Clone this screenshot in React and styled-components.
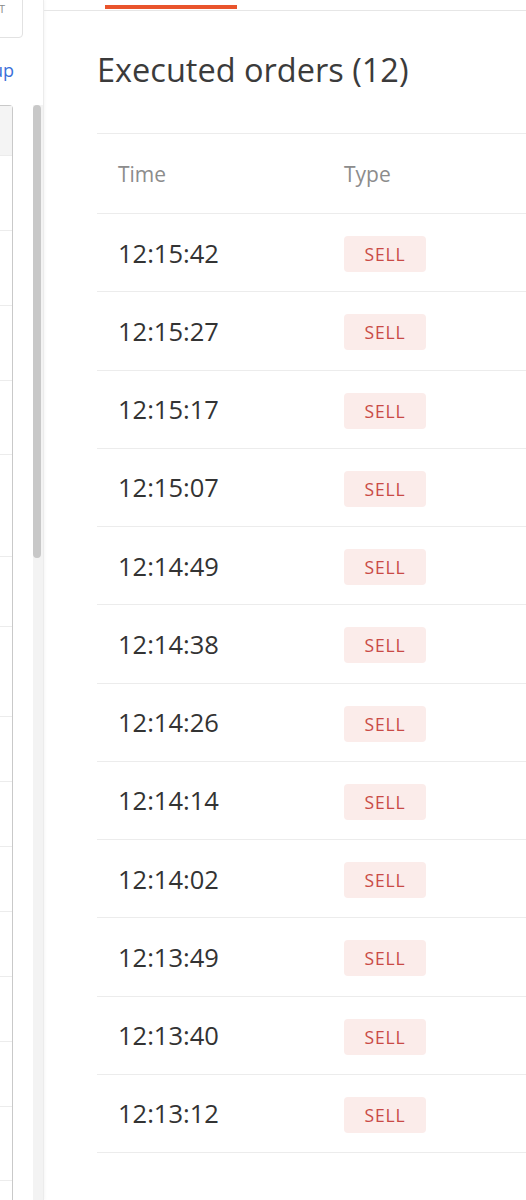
import React from 'react'
import styled, { createGlobalStyle } from 'styled-components'

const GlobalStyle = createGlobalStyle`
  html, body {
    margin: 0;
    padding: 0;
    background: #fff;
    font-family: "Open Sans", "Liberation Sans", sans-serif;
    overflow: hidden;
  }
`

const Page = styled.div`
  display: flex;
  width: 526px;
  height: 1200px;
  overflow: hidden;
`

// left column: only the right edge of a wider sidebar is visible
const Sidebar = styled.aside`
  display: flex;
  flex: 0 0 43px;
  border-right: 1px solid #ececec;
  box-shadow: 1px 0 3px rgba(0, 0, 0, 0.04);
`

const SideInner = styled.div`
  display: flex;
  flex-direction: column;
  align-items: flex-end;
  width: 33px;
  overflow: hidden;
`

const TopCard = styled.div`
  flex: 0 0 auto;
  width: 120px;
  height: 48px;
  margin-top: -10px;
  margin-right: 10px;
  box-sizing: border-box;
  border: 1px solid #e2e2e2;
  border-radius: 4px;
  padding: 11px 17px 0 0;
  text-align: right;
  font-size: 11px;
  line-height: 14px;
  color: #8a8a8a;
`

const SideLink = styled.a`
  margin-top: 20px;
  margin-right: 19px;
  font-size: 18px;
  line-height: 24px;
  color: #3b71d9;
  white-space: nowrap;
`

const SideTable = styled.div`
  margin-top: 23px;
  margin-right: 20px;
  width: 200px;
  box-sizing: border-box;
  border: 1px solid #c9c9c9;
  border-bottom: none;
  border-radius: 4px 4px 0 0;
`

const SideHead = styled.div`
  height: 50px;
  background: #f4f4f4;
  border-bottom: 1px solid #ececec;
  box-sizing: border-box;
`

const SideRow = styled.div`
  height: ${p => p.$h}px;
  border-bottom: 1px solid #ececec;
  box-sizing: border-box;
`

const ScrollTrack = styled.div`
  display: flex;
  flex: 0 0 10px;
  margin-top: 105px;
  background: #f3f3f3;
`

const ScrollThumb = styled.div`
  width: 8px;
  height: 453px;
  border-radius: 5px;
  background: #c8c8c8;
`

const Main = styled.main`
  flex: 1;
  min-width: 0;
  display: flex;
  flex-direction: column;
`

const Tabs = styled.div`
  display: flex;
  height: 11px;
  box-sizing: border-box;
  border-bottom: 1px solid #e6e6e6;
  padding-left: 61px;
`

const Tab = styled.div`
  align-self: flex-end;
  width: 132px;
  height: 4px;
  margin-bottom: 1px;
  background: ${p => (p.$active ? '#e9542c' : 'transparent')};
`

const Content = styled.section`
  padding-left: 53px;
`

const Title = styled.h2`
  margin: 40px 0 44px;
  font-size: 32.5px;
  line-height: 38px;
  font-weight: 400;
  color: #3b3b3b;
  white-space: nowrap;
`

const Table = styled.div`
  border-top: 1px solid #ececec;
`

const Row = styled.div`
  display: grid;
  grid-template-columns: 226px 1fr;
  align-items: center;
  height: ${p => (p.$head ? '80px' : '78.25px')};
  box-sizing: border-box;
  border-bottom: 1px solid #ececec;
`

const HeadCell = styled.div`
  padding-left: 21px;
  font-size: 21px;
  color: #8c8c8c;
`

const TimeCell = styled.div`
  padding-left: 21px;
  font-size: 25.5px;
  color: #333;
`

const TypeCell = styled.div`
  display: flex;
  padding: 3px 0 0 21px;
`

const Badge = styled.span`
  display: inline-flex;
  align-items: center;
  justify-content: center;
  width: 82px;
  height: 36px;
  border-radius: 4px;
  background: #fbecea;
  color: #c94a46;
  font-size: 17.5px;
  letter-spacing: 0.8px;
`

const sideRows = [75, 75, 75, 74, 102, 70, 90, 65, 65, 65, 65, 65, 65, 74, 60]

const orders = [
  '12:15:42', '12:15:27', '12:15:17', '12:15:07', '12:14:49', '12:14:38',
  '12:14:26', '12:14:14', '12:14:02', '12:13:49', '12:13:40', '12:13:12',
]

export default function App() {
  return (
    <>
      <GlobalStyle />
      <Page>
        <Sidebar>
          <SideInner>
            <TopCard>T</TopCard>
            <SideLink>up</SideLink>
            <SideTable>
              <SideHead />
              {sideRows.map((h, i) => (
                <SideRow key={i} $h={h} />
              ))}
            </SideTable>
          </SideInner>
          <ScrollTrack>
            <ScrollThumb />
          </ScrollTrack>
        </Sidebar>
        <Main>
          <Tabs>
            <Tab $active />
          </Tabs>
          <Content>
            <Title>Executed orders (12)</Title>
            <Table>
              <Row $head>
                <HeadCell>Time</HeadCell>
                <HeadCell>Type</HeadCell>
              </Row>
              {orders.map(t => (
                <Row key={t}>
                  <TimeCell>{t}</TimeCell>
                  <TypeCell>
                    <Badge>SELL</Badge>
                  </TypeCell>
                </Row>
              ))}
            </Table>
          </Content>
        </Main>
      </Page>
    </>
  )
}
